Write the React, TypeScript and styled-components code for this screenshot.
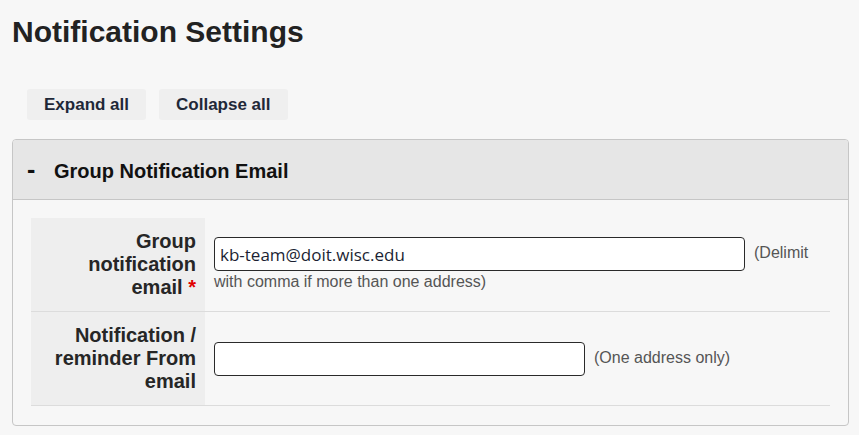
import React from 'react';
import styled, { createGlobalStyle } from 'styled-components';

const GlobalStyle = createGlobalStyle`
    body {
        margin: 0;
        background: #f7f7f7;
        font-family: "Liberation Sans", Arial, sans-serif;
        color: #222;
    }
`;

const Page = styled.div`
    padding: 14px 10px 10px 12px;
`;

const Title = styled.h1`
    margin: 0;
    font-size: 30px;
    line-height: 36px;
    font-weight: bold;
    color: #222;
`;

const Toolbar = styled.div`
    display: flex;
    gap: 13px;
    margin: 39px 0 19px 15px;
`;

const ToolButton = styled.button`
    height: 31px;
    padding: 0 17px;
    border: none;
    border-radius: 3px;
    background: #efefef;
    font-family: "Liberation Sans", Arial, sans-serif;
    font-size: 17px;
    font-weight: bold;
    color: #1f2838;
    cursor: pointer;
`;

const Panel = styled.section`
    border: 1px solid #c6c6c6;
    border-radius: 4px;
    overflow: hidden;
`;

const PanelHeader = styled.div`
    display: flex;
    align-items: center;
    box-sizing: border-box;
    height: 60px;
    padding: 3px 0 0 14px;
    background: #e6e6e6;
    border-bottom: 1px solid #c6c6c6;
    font-size: 20px;
    font-weight: bold;
    color: #111;
`;

const Toggle = styled.span`
    width: 27px;
    font-size: 25px;
    font-weight: 900;
    line-height: 1;
    margin-top: -3px;
`;

const PanelBody = styled.div`
    padding: 18px 18px 19px;
`;

const Row = styled.div`
    display: grid;
    grid-template-columns: 174px 1fr;
    border-bottom: 1px solid #dcdcdc;
`;

const Label = styled.label`
    background: #eeeeee;
    padding: 12px 9px 12px 16px;
    text-align: right;
    font-size: 20px;
    line-height: 23px;
    font-weight: bold;
    color: #262626;
`;

const Required = styled.span`
    color: #e00000;
`;

const Value = styled.div`
    display: flex;
    align-items: center;
    padding: 0 9px;
`;

const Field = styled.div`
    font-size: 16px;
    line-height: 21px;
    color: #555;
`;

const Input = styled.input<{ $width: number }>`
    box-sizing: border-box;
    width: ${({ $width }) => $width}px;
    height: 34px;
    padding: 0 5px;
    margin-right: 9px;
    border: 1px solid #2a2a2a;
    border-radius: 4px;
    background: #fff;
    font-family: "Open Sans", sans-serif;
    font-size: 17px;
    color: #1b1f33;
    vertical-align: middle;
`;

const App = () => {
    return (
        <Page>
            <GlobalStyle />
            <Title>Notification Settings</Title>

            <Toolbar>
                <ToolButton>Expand all</ToolButton>
                <ToolButton>Collapse all</ToolButton>
            </Toolbar>

            <Panel>
                <PanelHeader>
                    <Toggle>-</Toggle>
                    Group Notification Email
                </PanelHeader>
                <PanelBody>
                    <Row>
                        <Label>
                            Group notification email <Required>*</Required>
                        </Label>
                        <Value>
                            <Field>
                                <Input $width={531} defaultValue="kb-team@doit.wisc.edu" />
                                (Delimit with comma if more than one address)
                            </Field>
                        </Value>
                    </Row>
                    <Row>
                        <Label>Notification / reminder From email</Label>
                        <Value>
                            <Field>
                                <Input $width={371} />
                                (One address only)
                            </Field>
                        </Value>
                    </Row>
                </PanelBody>
            </Panel>
        </Page>
    );
};

export default App;
